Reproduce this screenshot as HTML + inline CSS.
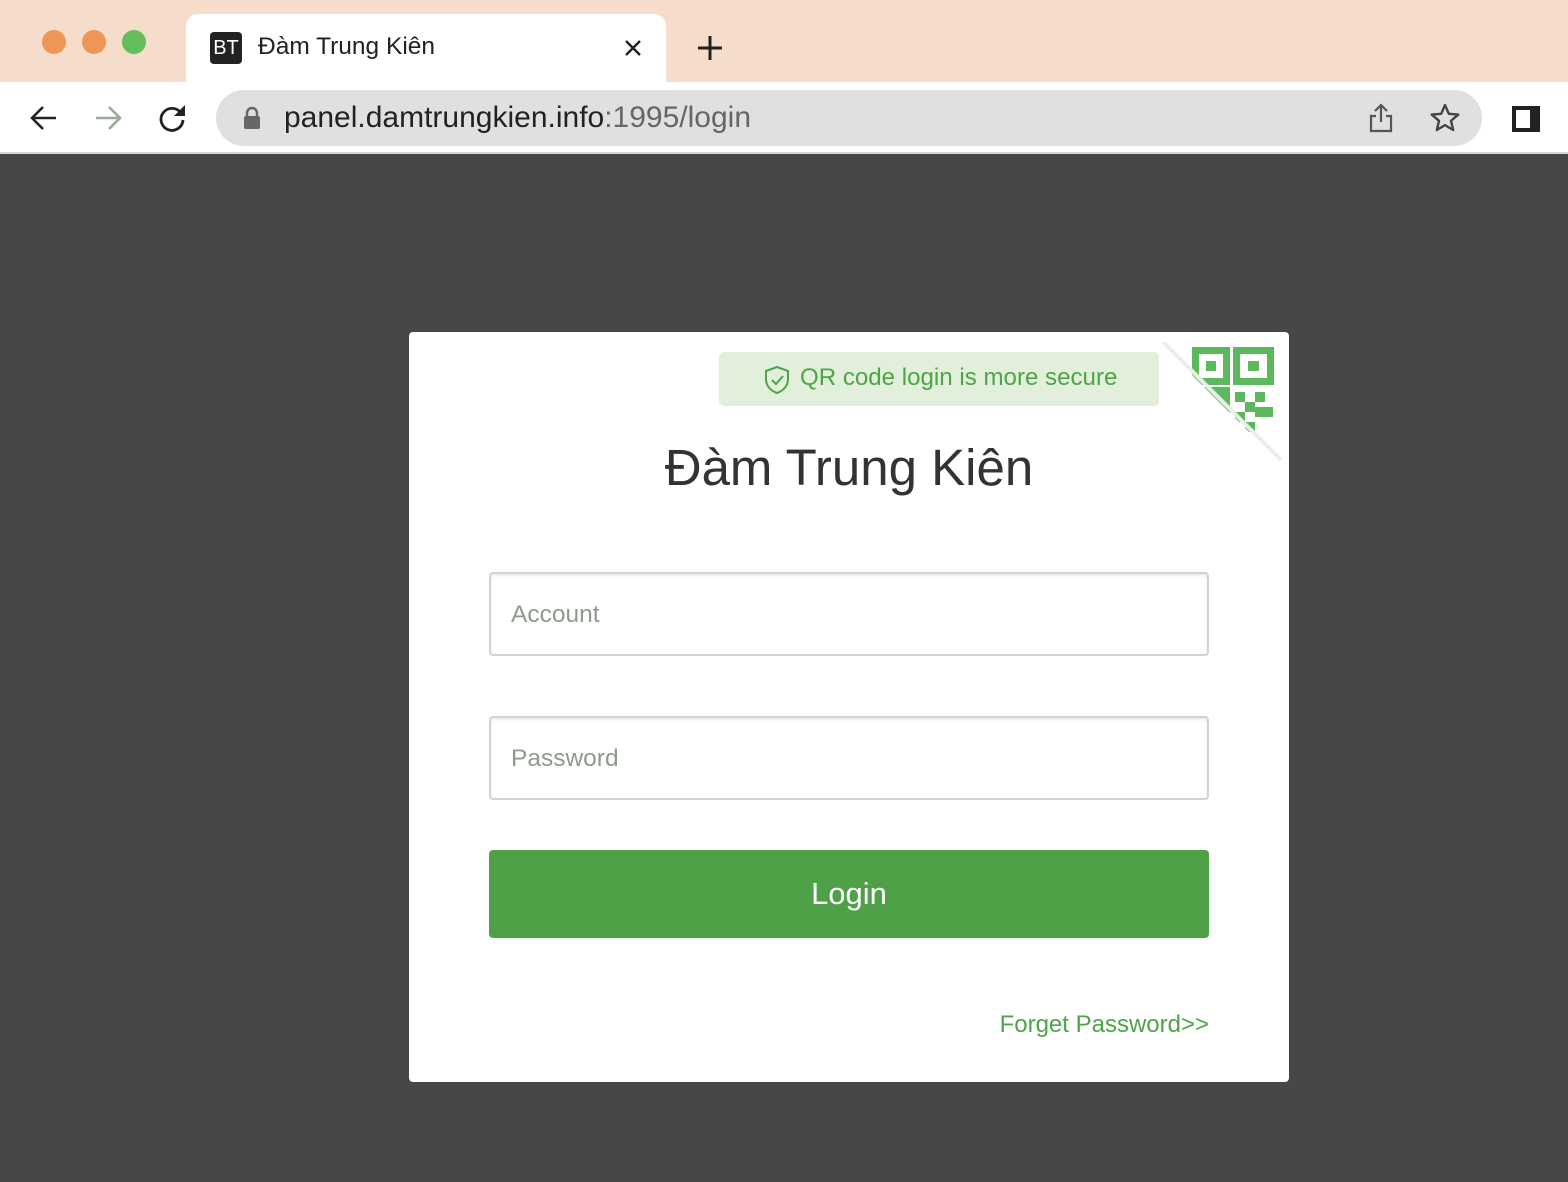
<!DOCTYPE html>
<html><head><meta charset="utf-8"><style>
*{margin:0;padding:0;box-sizing:border-box}
body{width:1568px;height:1182px;overflow:hidden;background:#474747;font-family:"Liberation Sans",Arial,sans-serif;position:relative}
.top{position:absolute;left:0;top:0;width:1568px;height:82px;background:#f6dccb}
.dot{position:absolute;top:30px;width:24px;height:24px;border-radius:50%}
.tab{position:absolute;left:186px;top:14px;width:480px;height:70px;background:#fff;border-radius:12px 12px 0 0}
.bar{position:absolute;left:0;top:82px;width:1568px;height:72px;background:#fff;border-bottom:2px solid #d6d6d6}
.url{position:absolute;left:216px;top:8px;width:1266px;height:56px;background:#e0e0e0;border-radius:28px}
.card{position:absolute;left:409px;top:332px;width:880px;height:750px;background:#fff;border-radius:4px;overflow:hidden}
.inp{position:absolute;left:80px;width:720px;height:84px;border:2px solid #d2d2d2;border-radius:4px;box-shadow:inset 0 2px 3px rgba(0,0,0,.08);font-size:24.5px;color:#8c9c8c;padding:27px 0 0 20px}
</style></head><body>
<div class="top">
<div class="dot" style="left:42px;background:#ef9657"></div>
<div class="dot" style="left:82px;background:#ef9657"></div>
<div class="dot" style="left:122px;background:#63be5c"></div>
</div>
<div class="tab">
<div style="position:absolute;left:24px;top:18px;width:32px;height:32px;background:#222;border-radius:4px;color:#fff;font-size:20px;line-height:32px;text-align:center">BT</div>
<div style="position:absolute;left:72px;top:19px;font-size:24.5px;color:#222">Đàm Trung Kiên</div>
<svg style="position:absolute;left:438px;top:25px" width="18" height="18"><path d="M2 2L16 16M16 2L2 16" stroke="#222" stroke-width="2.4"/></svg>
</div>
<svg style="position:absolute;left:697px;top:35px" width="26" height="26"><path d="M13 1V25M1 13H25" stroke="#222" stroke-width="3"/></svg>
<div class="bar">
<svg style="position:absolute;left:28px;top:20px" width="32" height="32"><path d="M28 16H4M15 5L4 16L15 27" fill="none" stroke="#222" stroke-width="2.6"/></svg>
<svg style="position:absolute;left:92px;top:20px" width="32" height="32"><path d="M4 16H28M17 5L28 16L17 27" fill="none" stroke="#9aab9a" stroke-width="2.6"/></svg>
<svg style="position:absolute;left:156px;top:20px" width="32" height="32"><path d="M25 11A11 11 0 1 0 27 18" fill="none" stroke="#222" stroke-width="2.8"/><path d="M29 3V14H18Z" fill="#222"/></svg>
<div class="url">
<svg style="position:absolute;left:26px;top:16px" width="20" height="24"><path d="M5 11V7A5 5 0 0 1 15 7V11" fill="none" stroke="#666" stroke-width="2.5"/><rect x="2" y="10" width="16" height="13" rx="2" fill="#666"/></svg>
<div style="position:absolute;left:68px;top:11px;font-size:30px;color:#222">panel.damtrungkien.info<span style="color:#666">:1995/login</span></div>
<svg style="position:absolute;left:1152px;top:12px" width="26" height="32"><path d="M13 20V3M7 9L13 3L19 9M8 14H3V29H23V14H18" fill="none" stroke="#555" stroke-width="2.2"/></svg>
<svg style="position:absolute;left:1214px;top:13px" width="30" height="30"><path d="M15 2L18.8 10.8L28.3 11.6L21 17.8L23.2 27L15 22.1L6.8 27L9 17.8L1.7 11.6L11.2 10.8Z" fill="none" stroke="#444" stroke-width="2.4" stroke-linejoin="round"/></svg>
</div>
<div style="position:absolute;left:1512px;top:24px;width:28px;height:26px;background:#222"></div>
<div style="position:absolute;left:1516px;top:28px;width:14px;height:18px;background:#fff"></div>
</div>
<div class="card">
<div style="position:absolute;left:310px;top:20px;width:440px;height:54px;background:#e1efdb;border-radius:5px"></div>
<div style="position:absolute;left:750px;top:36px;width:0;height:0;border-top:11px solid transparent;border-bottom:11px solid transparent;border-left:10px solid #e1efdb"></div>
<svg style="position:absolute;left:355px;top:33px" width="26" height="30"><path d="M13 2L24 6V14C24 21 19 26 13 28C7 26 2 21 2 14V6Z" fill="none" stroke="#4ea548" stroke-width="2"/><path d="M8 15L12 19L19 11" fill="none" stroke="#4ea548" stroke-width="2"/></svg>
<div style="position:absolute;left:391px;top:32px;font-size:24.1px;color:#4ea548">QR code login is more secure</div>
<svg style="position:absolute;left:750px;top:10px" width="130" height="130">
<g fill="#5cb85c">
<rect x="33" y="5" width="38" height="38"/><rect x="74" y="5" width="41" height="38"/>
<rect x="33" y="45" width="38" height="43"/><rect x="76" y="50" width="10" height="10"/><rect x="96" y="50" width="10" height="10"/><rect x="86" y="60" width="10" height="10"/><rect x="76" y="70" width="10" height="10"/><rect x="96" y="65" width="18" height="10"/><rect x="86" y="80" width="10" height="10"/>
</g>
<g fill="#fff"><rect x="40" y="12" width="24" height="24"/><rect x="81" y="12" width="27" height="24"/></g>
<g fill="#5cb85c"><rect x="47" y="19" width="10" height="10"/><rect x="89" y="19" width="11" height="10"/></g>
<path d="M0 0L120 120L0 120Z" fill="#fff"/>
<path d="M4 0L122 118" stroke="#ececec" stroke-width="4"/>
</svg>
<div style="position:absolute;left:0;width:880px;top:106px;text-align:center;font-size:51px;color:#333">Đàm Trung Kiên</div>
<div class="inp" style="top:240px">Account</div>
<div class="inp" style="top:384px">Password</div>
<div style="position:absolute;left:80px;top:518px;width:720px;height:88px;background:#4ea147;border-radius:4px;color:#fff;font-size:31px;text-align:center;line-height:88px">Login</div>
<div style="position:absolute;right:80px;top:679px;font-size:24px;color:#4ea548">Forget Password&gt;&gt;</div>
</div>
</body></html>
